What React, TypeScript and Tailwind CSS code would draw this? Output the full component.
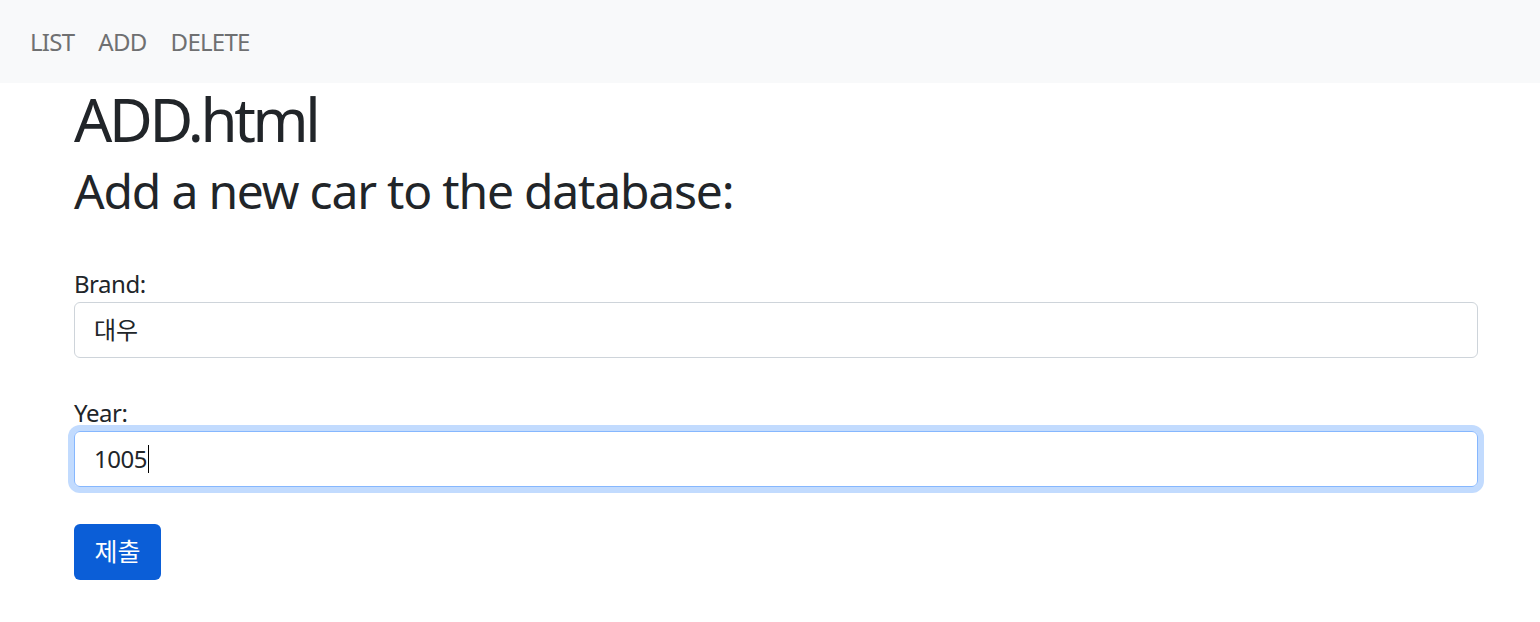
const font = { fontFamily: '"Noto Sans", "Noto Sans CJK KR", sans-serif' };

const navItems = ["LIST", "ADD", "DELETE"];

export default function App() {
  return (
    <div className="min-h-[622px] bg-white text-[#212529]" style={font}>
      <nav className="flex h-[83px] items-center bg-[#f8f9fa] px-[18px]">
        <ul className="flex">
          {navItems.map((item) => (
            <li key={item}>
              <a className="block px-[12px] text-[24px] leading-[36px] tracking-[-0.03em] text-[#6f7071]">
                {item}
              </a>
            </li>
          ))}
        </ul>
      </nav>

      <main className="ml-[74px] mr-[62px]">
        <h1 className="mb-[7px] text-[60px] leading-[72px] font-normal tracking-[-0.055em]">ADD.html</h1>
        <h2 className="text-[48px] leading-[58px] font-normal tracking-[-0.025em]">
          Add a new car to the database:
        </h2>

        <form className="pt-[46px]">
          <label className="block text-[24px] leading-[36px] tracking-[-0.02em]">Brand:</label>
          <div className="flex h-[56px] items-center rounded-[6px] border border-[#ced4da] px-[19px] text-[24px]">
            대우
          </div>

          <label className="mt-[37px] block text-[24px] leading-[36px] tracking-[-0.02em]">Year:</label>
          <div className="flex h-[56px] items-center rounded-[6px] border border-[#86b7fe] px-[19px] text-[24px] shadow-[0_0_0_6px_rgba(13,110,253,0.25)]">
            <span className="tracking-[-0.02em]">1005</span>
            <span className="ml-px inline-block h-[28px] w-px bg-black" />
          </div>

          <button
            type="button"
            className="mt-[37px] h-[56px] w-[87px] rounded-[6px] bg-[#0b5ed7] text-[25px] text-white"
          >
            제출
          </button>
        </form>
      </main>
    </div>
  );
}
